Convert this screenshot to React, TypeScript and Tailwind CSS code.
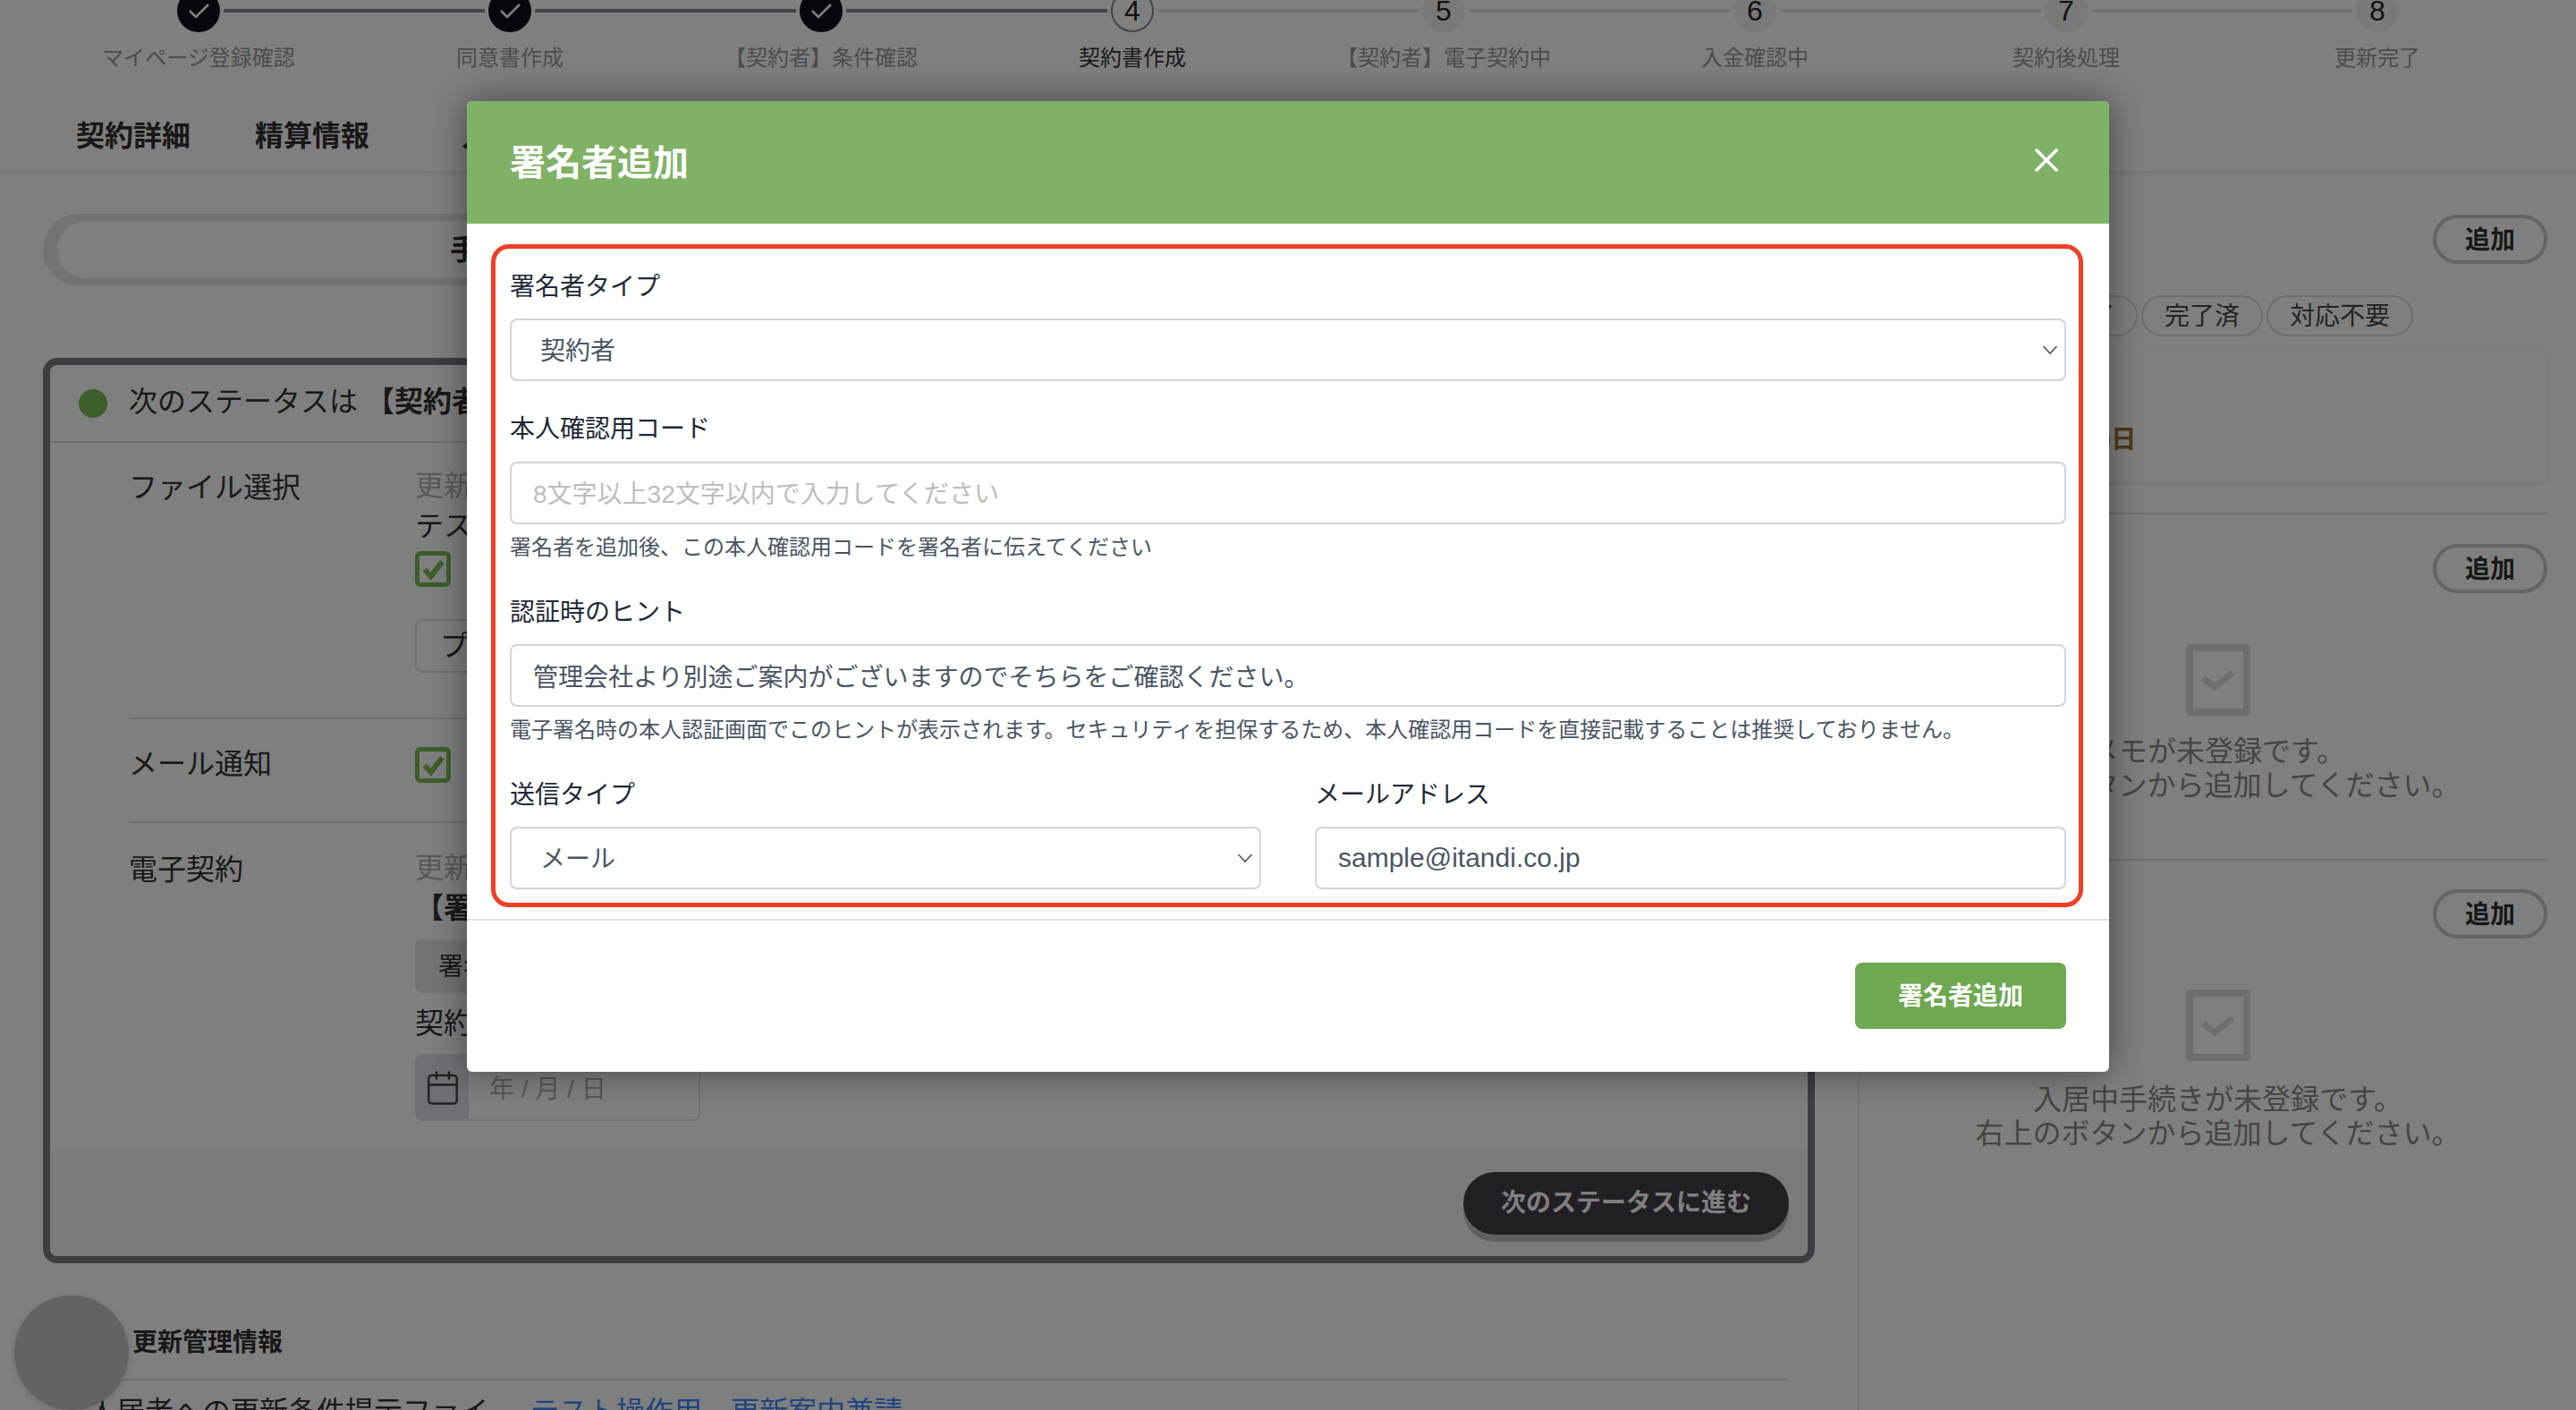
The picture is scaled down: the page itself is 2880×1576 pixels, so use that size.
import React from 'react';
import { Calendar, X } from 'lucide-react';

const steps = [
  'マイページ登録確認',
  '同意書作成',
  '【契約者】条件確認',
  '契約書作成',
  '【契約者】電子契約中',
  '入金確認中',
  '契約後処理',
  '更新完了',
];

const GreenCheckbox = () => (
  <div className="flex h-10 w-10 items-center justify-center rounded-md border-[5px] border-[#7abc54] text-[#7abc54]">
    <svg viewBox="0 0 24 24" fill="none" className="h-7 w-7">
      <path d="M4 12.5 10 19 21 5" stroke="currentColor" strokeWidth="5" />
    </svg>
  </div>
);

const AddButton = () => (
  <button className="flex h-[55px] w-[128px] items-center justify-center rounded-full border-4 border-[#c8c8c8] pt-[2px] text-[28px] font-bold text-[#303030]">
    追加
  </button>
);

const EmptyState = ({ lines, textClass }: { lines: string[]; textClass: string }) => (
  <div className="flex flex-col items-center">
    <div className="flex h-20 w-[72px] items-center justify-center rounded-sm border-8 border-[#dcdcdc] text-[#dcdcdc]">
      <svg viewBox="0 0 40 40" fill="none" className="h-10 w-10">
        <path d="M3 18 16 28 36 12" stroke="currentColor" strokeWidth="7" />
      </svg>
    </div>
    <div className={`text-center text-[32px] leading-[38px] text-[#8a8a8a] ${textClass}`}>
      {lines.map((l) => (
        <div key={l}>{l}</div>
      ))}
    </div>
  </div>
);

const Chevron = () => (
  <svg viewBox="0 0 18 11" fill="none" className="pointer-events-none absolute right-[9px] top-1/2 h-[11px] w-[18px] -translate-y-1/2 text-[#4b5563]">
    <path d="M1.5 1.5 9 9.5l7.5-8" stroke="currentColor" strokeWidth="1.6" />
  </svg>
);

const Field = ({ label, className, children }: { label: string; className?: string; children: React.ReactNode }) => (
  <div className={className}>
    <div className="h-10 text-[28px] leading-[44px] text-[#1f2937]">{label}</div>
    {children}
  </div>
);

const Stepper = () => (
  <div className="grid grid-cols-8 px-12">
    {steps.map((s, i) => {
      const n = i + 1;
      return (
        <div key={s} className="flex flex-col items-center">
          <div className="flex w-full items-center">
            <div className={`h-1 flex-1 ${i === 0 ? '' : n <= 4 ? 'bg-[#8a8894]' : 'bg-[#e6e6e6]'}`} />
            <div
              className={`mx-1 flex h-12 w-12 items-center justify-center rounded-full text-[32px] leading-none text-[#222] ${
                n <= 3 ? 'bg-[#100c18] text-white' : n === 4 ? 'border-2 border-[#8a8894] bg-white' : 'bg-[#f2f2f2]'
              }`}
            >
              {n <= 3 ? (
                <svg viewBox="0 0 48 48" fill="none" className="h-12 w-12">
                  <path d="M14 24 21 31 35 17" stroke="currentColor" strokeWidth="2.6" />
                </svg>
              ) : (
                n
              )}
            </div>
            <div className={`h-1 flex-1 ${i === 7 ? '' : n <= 3 ? 'bg-[#8a8894]' : 'bg-[#e6e6e6]'}`} />
          </div>
          <div className={`mt-[11px] h-9 text-[24px] leading-9 ${n === 4 ? 'text-[#333]' : 'text-[#999]'}`}>{s}</div>
        </div>
      );
    })}
  </div>
);

const AddSignerModal = () => (
  <div className="absolute inset-0 z-20 flex items-start justify-center bg-black/50 pt-[113px]">
    <div className="w-[1836px] overflow-hidden rounded-md bg-white shadow-[0_0_40px_rgba(0,0,0,0.45)]">
      {/* Header */}
      <div className="flex h-[137px] items-center justify-between bg-[#80b266] pl-12 pr-[48px]">
        <h2 className="text-[40px] font-bold text-white">署名者追加</h2>
        <X className="mb-[6px] h-11 w-11 text-white" strokeWidth={2} />
      </div>

      {/* Body */}
      <div className="relative px-12 pb-[33px] pt-[49px]">
        <div className="pointer-events-none absolute left-[27px] top-[23px] h-[741px] w-[1780px] rounded-[20px] border-[5px] border-[#ee4025]" />

        <Field label="署名者タイプ">
          <div className="relative mt-[17px]">
            <select
              defaultValue="契約者"
              className="h-[70px] w-full appearance-none rounded-lg border-2 border-[#d1d5db] bg-white pl-8 pt-[3px] text-[28px] text-[#4b5563]"
            >
              <option>契約者</option>
            </select>
            <Chevron />
          </div>
        </Field>

        <Field label="本人確認用コード" className="mt-[32px]">
          <input
            placeholder="8文字以上32文字以内で入力してください"
            className="mt-[18px] h-[70px] w-full rounded-lg border-2 border-[#d1d5db] pl-6 pt-[3px] text-[28px] text-[#4b5563] placeholder:text-[#bdbdbd]"
          />
          <p className="mt-2 text-[24px] leading-9 text-[#4b5563]">署名者を追加後、この本人確認用コードを署名者に伝えてください</p>
        </Field>

        <Field label="認証時のヒント" className="mt-[33px]">
          <input
            defaultValue="管理会社より別途ご案内がございますのでそちらをご確認ください。"
            className="mt-[17px] h-[70px] w-full rounded-lg border-2 border-[#d1d5db] pl-6 text-[28px] text-[#4b5563]"
          />
          <p className="mt-2 text-[24px] leading-9 text-[#4b5563]">
            電子署名時の本人認証画面でこのヒントが表示されます。セキュリティを担保するため、本人確認用コードを直接記載することは推奨しておりません。
          </p>
        </Field>

        <div className="mt-[33px] grid grid-cols-2 gap-[60px]">
          <Field label="送信タイプ">
            <div className="relative mt-[17px]">
              <select
                defaultValue="メール"
                className="h-[70px] w-full appearance-none rounded-lg border-2 border-[#d1d5db] bg-white pl-8 pt-[3px] text-[28px] text-[#4b5563]"
              >
                <option>メール</option>
              </select>
              <Chevron />
            </div>
          </Field>
          <Field label="メールアドレス">
            <input
              defaultValue="sample@itandi.co.jp"
              className="mt-[17px] h-[70px] w-full rounded-lg border-2 border-[#d1d5db] pl-6 text-[30px] text-[#4b5563]"
            />
          </Field>
        </div>
      </div>

      {/* Footer */}
      <div className="flex justify-end border-t-2 border-[#e0e0e0] px-12 pb-12 pt-[47px]">
        <button className="h-[74px] w-[236px] rounded-lg bg-[#6ea851] pt-[2px] text-[28px] font-bold text-white">署名者追加</button>
      </div>
    </div>
  </div>
);

const StatusCard = () => (
  <div className="mt-[81px] h-[1012px] rounded-2xl border-8 border-[#7c7a84]">
    <div className="flex h-[87px] items-center border-b-2 border-[#dedede] pl-8">
      <div className="h-8 w-8 rounded-full bg-[#7abc54]" />
      <span className="-mt-1 ml-6 whitespace-nowrap text-[32px] text-[#333]">
        次のステータスは <b>【契約者】電子契約中</b>
      </span>
    </div>

    <div className="ml-[88px] mr-6 h-[792px] text-[32px] text-[#333]">
      <div className="flex h-[309px] border-b-2 border-[#dedede] pt-[26px]">
        <div className="w-80 leading-12">ファイル選択</div>
        <div className="leading-[45px]">
          <div className="text-[#b4b4b4]">更新書類</div>
          <div>テスト</div>
          <div className="mt-[5px]">
            <GreenCheckbox />
          </div>
          <div className="mt-9 flex h-[60px] w-[240px] items-center rounded-lg border-2 border-[#e0e0e0] pl-[26px]">プレビュー</div>
        </div>
      </div>
      <div className="flex h-[116px] items-start border-b-2 border-[#dedede] pt-[31px]">
        <div className="-mt-[5px] w-80 leading-12">メール通知</div>
        <GreenCheckbox />
      </div>
      <div className="flex pt-7">
        <div className="w-80 leading-12">電子契約</div>
        <div className="leading-[45px]">
          <div className="text-[#b4b4b4]">更新書類</div>
          <div className="font-bold">【署名者】</div>
          <div className="mt-3 flex h-[60px] w-[240px] items-center rounded-lg bg-[#e8e8e8] pl-[26px] text-[28px]">署名者追加</div>
          <div className="mt-3">契約日</div>
          <div className="mt-[11px] flex h-[75px] w-[319px] items-center overflow-hidden rounded-lg border-2 border-[#e4e4e4]">
            <div className="flex h-full w-[58px] items-center justify-center bg-[#dee0ea]">
              <Calendar className="h-[42px] w-[42px] text-[#464646]" strokeWidth={1.4} />
            </div>
            <span className="ml-[23px] pt-[3px] text-[28px] text-[#aeaeae]">年 / 月 / 日</span>
          </div>
        </div>
      </div>
    </div>

    <div className="flex h-[117px] justify-end rounded-b-lg bg-[#f4f4f8] pr-[21px] pt-[23px]">
      <button className="h-[70px] w-[364px] rounded-full bg-[#423e48] text-[28px] font-bold text-white shadow-[0_8px_0_#c2bec6]">
        次のステータスに進む
      </button>
    </div>
  </div>
);

export default function App() {
  return (
    <div className="relative h-[1576px] w-full overflow-hidden bg-white font-['Liberation_Sans','Noto_Sans_CJK_JP',sans-serif]">
      {/* Header */}
      <header className="relative z-10 -mt-3 bg-white pb-[17px] shadow-[0_2px_6px_rgba(0,0,0,0.1)]">
        <Stepper />
        <nav className="mt-[43px] flex h-12 gap-[72px] pl-[85px] text-[32px] font-bold leading-[52px] text-[#303030]">
          <span>契約詳細</span>
          <span>精算情報</span>
          <span className="ml-[31px]">入居者情報</span>
        </nav>
      </header>

      <main className="flex h-[1385px]">
        {/* Left column */}
        <div className="w-[2079px] shrink-0 border-r-2 border-[#ededed] pl-12 pr-[48px] pt-12">
          <div className="flex h-20 rounded-full bg-[#e6e6e6] p-2 px-4">
            <div className="flex flex-1 items-center justify-center rounded-full bg-white text-[32px] font-bold text-[#303030]">手続き</div>
            <div className="flex flex-1 items-center justify-center text-[32px] font-bold text-[#303030]">メモ</div>
          </div>
          <StatusCard />
          <div className="ml-[50px] mr-[31px] mt-[68px]">
            <div className="h-[63px] border-b-2 border-[#dcdcdc] pl-[50px] text-[28px] font-bold leading-[42px] text-[#303030]">更新管理情報</div>
            <div className="flex pt-[11px] text-[32px] leading-12">
              <div className="w-[448px] text-[#333]">入居者への更新条件提示ファイル</div>
              <div className="ml-[47px] whitespace-nowrap text-[#4088ff]">テスト操作用　更新案内兼請</div>
            </div>
          </div>
        </div>

        {/* Right column */}
        <div className="flex-1 pl-[32px] pr-8 pt-[49px]">
          <div className="flex justify-end">
            <AddButton />
          </div>
          <div className="mt-[35px] flex justify-end gap-1 pr-[150px] text-[28px] text-[#484848]">
            {['未完了', '完了済', '対応不要'].map((c) => (
              <span key={c} className="flex h-[46px] items-center rounded-full border-2 border-[#dcdcdc] px-6 pt-[2px]">
                {c}
              </span>
            ))}
          </div>
          <div className="mt-[15px] flex h-[148px] items-center rounded-lg pl-[50px] pt-[54px] shadow-[0_1px_4px_rgba(0,0,0,0.12)]">
            <span className="text-[28px] font-bold text-[#9c7428]">契約終了まで30日</span>
          </div>
          <div className="mt-[34px] border-t-2 border-[#dcdcdc] pt-[33px]">
            <div className="flex justify-end">
              <AddButton />
            </div>
            <div className="mt-[57px]">
              <EmptyState textClass="mt-[21px]" lines={['メモが未登録です。', '右上のボタンから追加してください。']} />
            </div>
          </div>
          <div className="mt-[63px] border-t-2 border-[#dcdcdc] pt-[32px]">
            <div className="flex justify-end">
              <AddButton />
            </div>
            <div className="mt-[57px]">
              <EmptyState textClass="mt-[24px]" lines={['入居中手続きが未登録です。', '右上のボタンから追加してください。']} />
            </div>
          </div>
        </div>
      </main>

      {/* Floating help button */}
      <div className="absolute left-4 top-[1448px] z-10 h-32 w-32 rounded-full bg-[#c6c6c6] shadow-[0_2px_10px_rgba(0,0,0,0.15)]" />

      <AddSignerModal />
    </div>
  );
}
